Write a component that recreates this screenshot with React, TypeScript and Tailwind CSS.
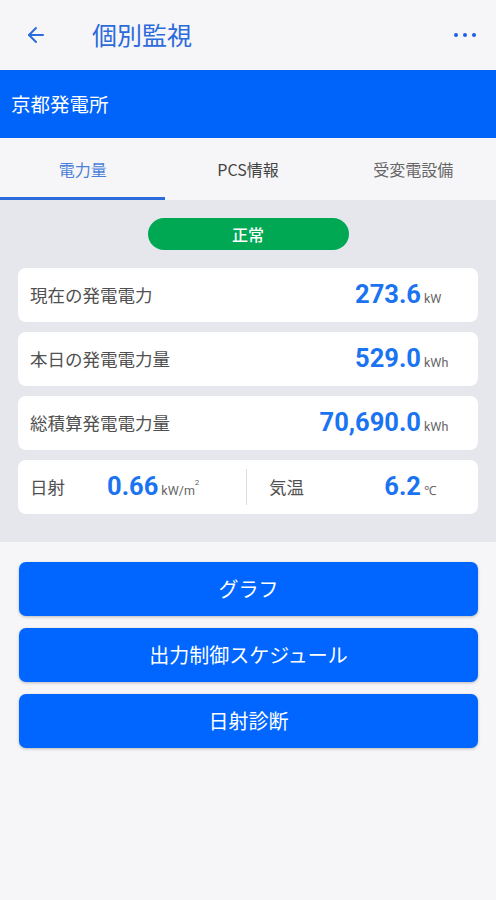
import { ArrowLeft } from "lucide-react";

const jp = { fontFamily: '"Noto Sans CJK JP", "Noto Sans", sans-serif' };
const num = { fontFamily: 'Roboto, "Noto Sans", sans-serif' };

const rows = [
  { label: "現在の発電電力", value: "273.6", unit: "kW" },
  { label: "本日の発電電力量", value: "529.0", unit: "kWh" },
  { label: "総積算発電電力量", value: "70,690.0", unit: "kWh" },
];

const actions = ["グラフ", "出力制御スケジュール", "日射診断"];

function Value({ value, unit, w = "w-[40px]" }: { value: string; unit: React.ReactNode; w?: string }) {
  return (
    <div className="flex items-baseline">
      <span style={num} className="text-[25.5px] font-bold text-[#1a73f0] leading-none">
        {value}
      </span>
      <span style={num} className={`${w} pl-[3px] text-[12.5px] text-[#666]`}>
        {unit}
      </span>
    </div>
  );
}

export default function App() {
  return (
    <div style={jp} className="w-[496px] min-h-[900px] bg-[#f6f6f8]">
      <header className="h-[70px] flex items-center px-[24px] text-[#2c6bdc]">
        <ArrowLeft className="h-6 w-6" strokeWidth={2} />
        <h1 className="ml-[44px] text-[25px]">個別監視</h1>
        <div className="ml-auto mr-[-4px] flex gap-[5px]">
          <span className="h-[4px] w-[4px] rounded-full bg-[#1d5fe0]" />
          <span className="h-[4px] w-[4px] rounded-full bg-[#1d5fe0]" />
          <span className="h-[4px] w-[4px] rounded-full bg-[#1d5fe0]" />
        </div>
      </header>

      <div className="h-[68px] bg-[#0064fa] flex items-center px-[11px] text-white text-[19.5px]">
        京都発電所
      </div>

      <nav className="h-[62px] grid grid-cols-3 bg-[#f6f6f8] text-[16px]">
        <div className="flex items-center justify-center border-b-[3px] border-[#2c6bdc] text-[#4c7fd9] pt-[3px]">
          電力量
        </div>
        <div className="flex items-center justify-center text-[#444]">PCS情報</div>
        <div className="flex items-center justify-center text-[#666]">受変電設備</div>
      </nav>

      <section className="bg-[#e5e7ed] pt-[18px] pb-[28px] px-[18px]">
        <div className="mx-auto w-[201px] h-[32px] rounded-full bg-[#00a854] flex items-center justify-center text-white text-[16px] font-medium">
          正常
        </div>
        <div className="mt-[18px] flex flex-col gap-[10px]">
          {rows.map((r) => (
            <div
              key={r.label}
              className="h-[54px] rounded-[8px] bg-white flex items-center justify-between pl-[12px] pr-[17px]"
            >
              <span className="text-[17.5px] text-[#505050]">{r.label}</span>
              <Value value={r.value} unit={r.unit} />
            </div>
          ))}
          <div className="h-[54px] rounded-[8px] bg-white flex items-center">
            <div className="w-[229px] flex items-center pl-[12px] border-r border-[#dcdde2] h-[36px]">
              <span className="w-[77px] text-[17.5px] text-[#505050]">日射</span>
              <Value
                value="0.66"
                unit={
                  <>
                    kW/m<sup className="text-[8px] align-[6px]">2</sup>
                  </>
                }
                w="w-auto"
              />
            </div>
            <div className="flex-1 flex items-center justify-between pl-[22px] pr-[17px]">
              <span className="text-[17.5px] text-[#505050]">気温</span>
              <Value value="6.2" unit="℃" />
            </div>
          </div>
        </div>
      </section>

      <div className="pt-[20px] pl-[19px] pr-[18px] flex flex-col gap-[12px]">
        {actions.map((a) => (
          <button
            key={a}
            className="h-[54px] rounded-[7px] bg-[#0066ff] text-white text-[20px] shadow-[0_1px_3px_rgba(0,0,0,0.25)]"
          >
            {a}
          </button>
        ))}
      </div>
    </div>
  );
}
